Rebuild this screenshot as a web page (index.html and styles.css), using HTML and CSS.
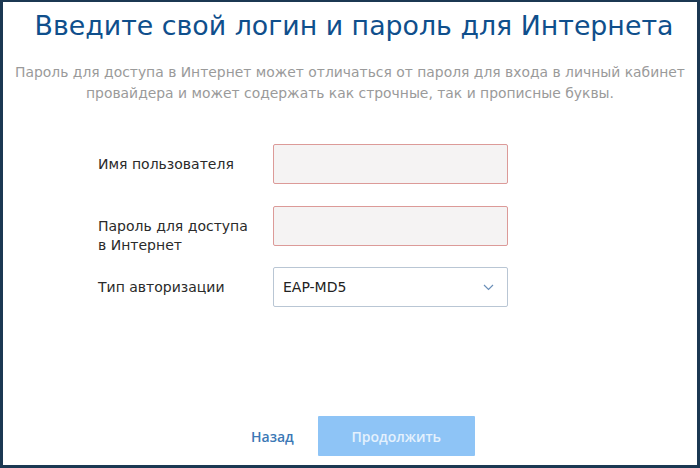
FILE: index.html
```html
<!DOCTYPE html>
<html lang="ru">
<head>
<meta charset="utf-8">
<link rel="stylesheet" href="styles.css">
</head>
<body>
<div class="frame">
  <h1 class="title">Введите свой логин и пароль для Интернета</h1>
  <p class="hint">Пароль для доступа в Интернет может отличаться от пароля для входа в личный кабинет<br>провайдера и может содержать как строчные, так и прописные буквы.</p>
  <div class="form">
    <label class="label">Имя пользователя</label>
    <div class="input invalid"></div>
    <label class="label">Пароль для доступа<br>в Интернет</label>
    <div class="input invalid"></div>
    <label class="label">Тип авторизации</label>
    <div class="input select">
      <span>EAP-MD5</span>
      <svg class="chev" width="11" height="7" viewBox="0 0 11 7"><path d="M1 1 L5.5 5.5 L10 1" fill="none" stroke="#6a8fb8" stroke-width="1.2"/></svg>
    </div>
  </div>
  <div class="actions">
    <a class="back">Назад</a>
    <button class="next">Продолжить</button>
  </div>
</div>
</body>
</html>
```
FILE: styles.css
```css
html, body {
  margin: 0;
  padding: 0;
  background: #fff;
}
.frame {
  width: 700px;
  height: 468px;
  box-sizing: border-box;
  border: 3px solid #1b3852;
  border-top-width: 2px;
  background: #fff;
  display: flex;
  flex-direction: column;
  font-family: "DejaVu Sans", Verdana, sans-serif;
}
.title {
  margin: 7px 0 0 8px;
  font-weight: normal;
  font-size: 26.8px;
  line-height: 34px;
  color: #0f4f8c;
  text-align: center;
}
.hint {
  margin: 19px 0 0 0;
  font-size: 13.9px;
  line-height: 21px;
  color: #9a9a9a;
  text-align: center;
}
.form {
  margin: 40px 0 0 95px;
  display: grid;
  grid-template-columns: 175px 235px;
  grid-auto-rows: 40px;
  row-gap: 21.5px;
  align-items: start;
}
.label {
  padding-top: 11px;
  font-size: 14px;
  line-height: 19px;
  color: #2a2a2a;
}
.input {
  height: 40px;
  box-sizing: border-box;
  border-radius: 2px;
}
.invalid {
  background: #f5f3f3;
  border: 1px solid #dc9a98;
}
.select {
  background: #fff;
  border: 1px solid #b9c6d4;
  display: flex;
  align-items: center;
  justify-content: space-between;
  padding: 0 13px 0 9px;
  font-size: 14px;
  color: #222;
}
.actions {
  margin: auto 0 9px 248px;
  display: flex;
  align-items: center;
  gap: 24px;
}
.back {
  font-size: 14px;
  color: #3b78b5;
  font-weight: 600;
  font-family: "Open Sans", sans-serif;
}
.next {
  width: 157px;
  height: 40px;
  border: none;
  background: #8ec4f6;
  color: #e4f1fd;
  font-family: "Open Sans", sans-serif;
  font-weight: 600;
  font-size: 14px;
  border-radius: 1px;
}
```
